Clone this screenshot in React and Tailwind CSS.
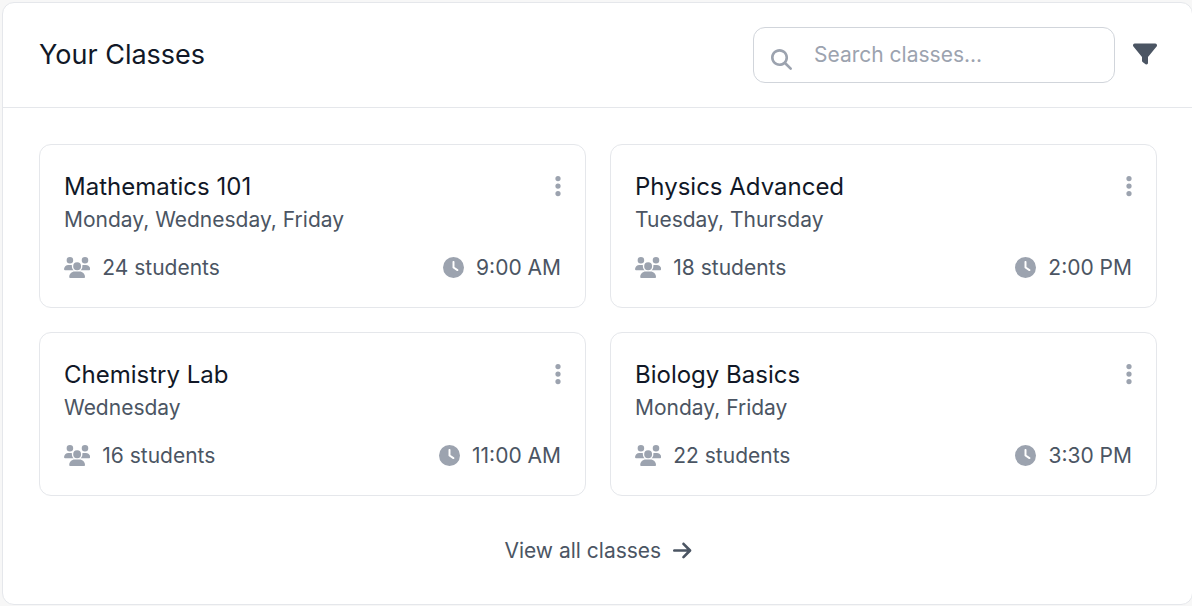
import React from "react";
import {
  FaArrowRight,
  FaClock,
  FaEllipsisVertical,
  FaFilter,
  FaMagnifyingGlass,
  FaUsers,
} from "react-icons/fa6";

const classes = [
  { name: "Mathematics 101", days: "Monday, Wednesday, Friday", students: 24, time: "9:00 AM" },
  { name: "Physics Advanced", days: "Tuesday, Thursday", students: 18, time: "2:00 PM" },
  { name: "Chemistry Lab", days: "Wednesday", students: 16, time: "11:00 AM" },
  { name: "Biology Basics", days: "Monday, Friday", students: 22, time: "3:30 PM" },
];

function ClassCard({ item }) {
  return (
    <article className="rounded-[12px] border border-[#e5e7eb] p-6">
      <div className="flex items-start justify-between">
        <div>
          <h3 className="text-[24px] leading-[36px] text-[#111827]">{item.name}</h3>
          <p className="text-[21px] leading-[30px] text-[#4b5563]">{item.days}</p>
        </div>
        <button type="button" aria-label="Class options" className="flex h-[34px] items-center text-[#9ca3af]">
          <FaEllipsisVertical className="h-6 w-[6px]" />
        </button>
      </div>
      <div className="mt-[18px] flex items-center justify-between text-[21px] leading-[30px] text-[#4b5563]">
        <div className="flex items-center">
          <FaUsers className="mb-px mr-3 h-[21px] w-[26.25px] text-[#9ca3af]" />
          <span>{item.students} students</span>
        </div>
        <div className="flex items-center">
          <FaClock className="mb-px mr-3 h-[21px] w-[21px] text-[#9ca3af]" />
          <span>{item.time}</span>
        </div>
      </div>
    </article>
  );
}

export default function App() {
  return (
    <div className="h-[606px] w-full overflow-hidden bg-[#f7f7f7] pl-[2px] pt-[2px] font-['Inter',sans-serif]">
      <section className="h-[603px] w-[1191px] rounded-[12px] border border-[#e5e7eb] bg-white">
        <header className="flex h-[105px] items-center justify-between border-b border-[#e5e7eb] pl-9 pr-[35px]">
          <h2 className="text-[27px] leading-[42px] text-[#111827]">Your Classes</h2>
          <div className="flex items-center gap-[18px]">
            <label className="flex h-14 w-[362px] items-center rounded-[12px] border border-[#d1d5db] pl-[17px]">
              <FaMagnifyingGlass className="mt-[9px] h-[21px] w-[21px] shrink-0 text-[#9ca3af]" />
              <input
                type="text"
                placeholder="Search classes..."
                className="ml-[22px] w-[280px] bg-transparent text-[21px] leading-[30px] outline-none placeholder:text-[#9ca3af]"
              />
            </label>
            <button type="button" aria-label="Filter classes" className="mb-[2px] text-[#4b5563]">
              <FaFilter className="h-6 w-6" />
            </button>
          </div>
        </header>
        <div className="py-9 pl-9 pr-[35px]">
          <div className="grid grid-cols-2 gap-6">
            {classes.map((item) => (
              <ClassCard key={item.name} item={item} />
            ))}
          </div>
          <div className="mt-[40px] flex justify-center">
            <button type="button" className="flex items-center text-[21px] leading-[30px] text-[#4b5563]">
              <span>View all classes</span>
              <FaArrowRight className="mb-px ml-3 h-[21px] w-[18.375px]" />
            </button>
          </div>
        </div>
      </section>
    </div>
  );
}
